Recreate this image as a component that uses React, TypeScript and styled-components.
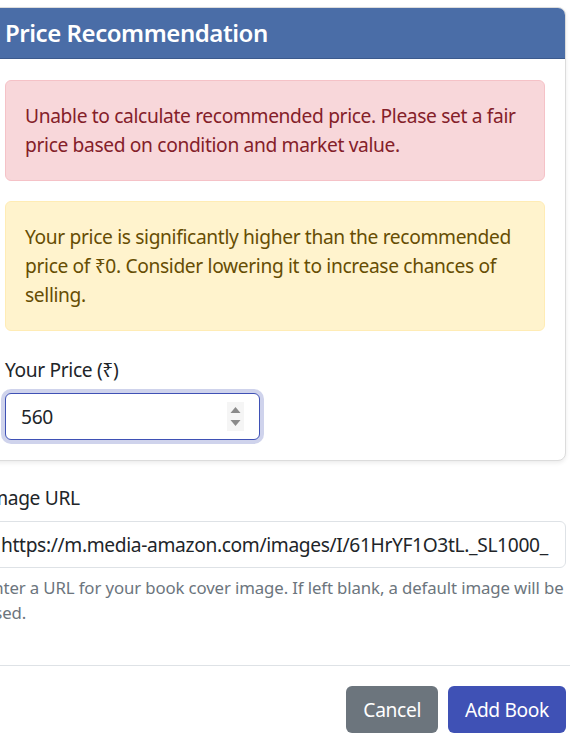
import React from "react";
import styled, { createGlobalStyle } from "styled-components";

const Global = createGlobalStyle`
  html, body { margin: 0; padding: 0; background: #fff; }
  body {
    font-family: "Noto Sans", "Open Sans", sans-serif;
    color: #212529;
    font-size: 19.2px;
    line-height: 29px;
    letter-spacing: -0.35px;
    overflow: hidden;
  }
  * { box-sizing: border-box; }
  input, button { letter-spacing: inherit; }
`;

const Page = styled.div`
  width: 582px;
  margin-left: -16px;
  padding-top: 7px;
`;

const Card = styled.section`
  border: 1px solid #dcdcdc;
  border-radius: 8px;
  background: #fff;
  box-shadow: 0 2px 4px rgba(0, 0, 0, 0.08);
  overflow: hidden;
  margin-bottom: 22px;
`;

const CardHeader = styled.header`
  background: #4a6da7;
  border-bottom: 1px solid #3c5a8d;
  height: 51px;
  padding: 0 20px;
  display: flex;
  align-items: center;
`;

const Title = styled.h5`
  margin: 0;
  color: #fff;
  font-size: 24px;
  font-weight: 600;
  line-height: 1.2;
  letter-spacing: -0.45px;
`;

const CardBody = styled.div`
  padding: 21px 20px 20px;
`;

const Alert = styled.div<{ $variant: "danger" | "warning" }>`
  border-radius: 6px;
  padding: 20px 19px 21px;
  margin-bottom: 20px;
  background: ${(p) => (p.$variant === "danger" ? "#f8d7da" : "#fff3cd")};
  border: 1px solid ${(p) => (p.$variant === "danger" ? "#f5c2c7" : "#ffecb5")};
  color: ${(p) => (p.$variant === "danger" ? "#842029" : "#664d03")};
  & + & { margin-bottom: 24px; }
`;

const Label = styled.label`
  display: block;
  margin-bottom: 9px;
`;

const PriceWrap = styled.div`
  position: relative;
  width: 255px;
`;

const PriceInput = styled.input`
  display: block;
  width: 100%;
  height: 47px;
  padding: 0 40px 0 15px;
  font: inherit;
  color: #212529;
  border: 1px solid #3f51b5;
  border-radius: 6px;
  box-shadow: 0 0 0 4px rgba(63, 81, 181, 0.25);
  outline: none;
`;

const Spinner = styled.svg`
  position: absolute;
  right: 16px;
  top: 9px;
  width: 17px;
  height: 29px;
  pointer-events: none;
`;

const Group = styled.div`
  margin-bottom: 0;
`;

const UrlInput = styled.input`
  display: block;
  width: 100%;
  height: 47px;
  padding: 0 16px;
  font: inherit;
  color: #212529;
  border: 1px solid #dee2e6;
  border-radius: 6px;
  outline: none;
`;

const Help = styled.div`
  margin-top: 7px;
  font-size: 16.8px;
  line-height: 25px;
  letter-spacing: -0.12px;
  color: #6c757d;
`;

const Divider = styled.hr`
  margin: 40px 0 0;
  border: 0;
  border-top: 1px solid #dee2e6;
  width: 600px;
`;

const Footer = styled.div`
  display: flex;
  justify-content: flex-end;
  gap: 10px;
  padding-top: 20px;
`;

const Button = styled.button<{ $variant: "secondary" | "primary" }>`
  height: 47px;
  padding: 0 17px;
  font: inherit;
  color: #fff;
  border: 0;
  border-radius: 6px;
  background: ${(p) => (p.$variant === "secondary" ? "#6c757d" : "#3f51b5")};
`;

export default function App() {
  return (
    <>
      <Global />
      <Page>
        <Card>
          <CardHeader>
            <Title>Price Recommendation</Title>
          </CardHeader>
          <CardBody>
            <Alert $variant="danger">
              Unable to calculate recommended price. Please set a fair price based on condition and market value.
            </Alert>
            <Alert $variant="warning">
              Your price is significantly higher than the recommended price of ₹0. Consider lowering it to increase
              chances of selling.
            </Alert>
            <Label>Your Price (₹)</Label>
            <PriceWrap>
              <PriceInput type="text" defaultValue="560" />
              <Spinner viewBox="0 0 17 29">
                <rect x="0" y="0" width="17" height="29" fill="#f5f5f5" />
                <path d="M3.5 11 L8.5 5 L13.5 11 Z" fill="#8a8a8a" />
                <path d="M3.5 18 L13.5 18 L8.5 24 Z" fill="#8a8a8a" />
              </Spinner>
            </PriceWrap>
          </CardBody>
        </Card>
        <Group>
          <Label>Image URL</Label>
          <UrlInput type="text" defaultValue="https://m.media-amazon.com/images/I/61HrYF1O3tL._SL1000_" />
          <Help>Enter a URL for your book cover image. If left blank, a default image will be used.</Help>
        </Group>
        <Divider />
        <Footer>
          <Button $variant="secondary">Cancel</Button>
          <Button $variant="primary">Add Book</Button>
        </Footer>
      </Page>
    </>
  );
}
